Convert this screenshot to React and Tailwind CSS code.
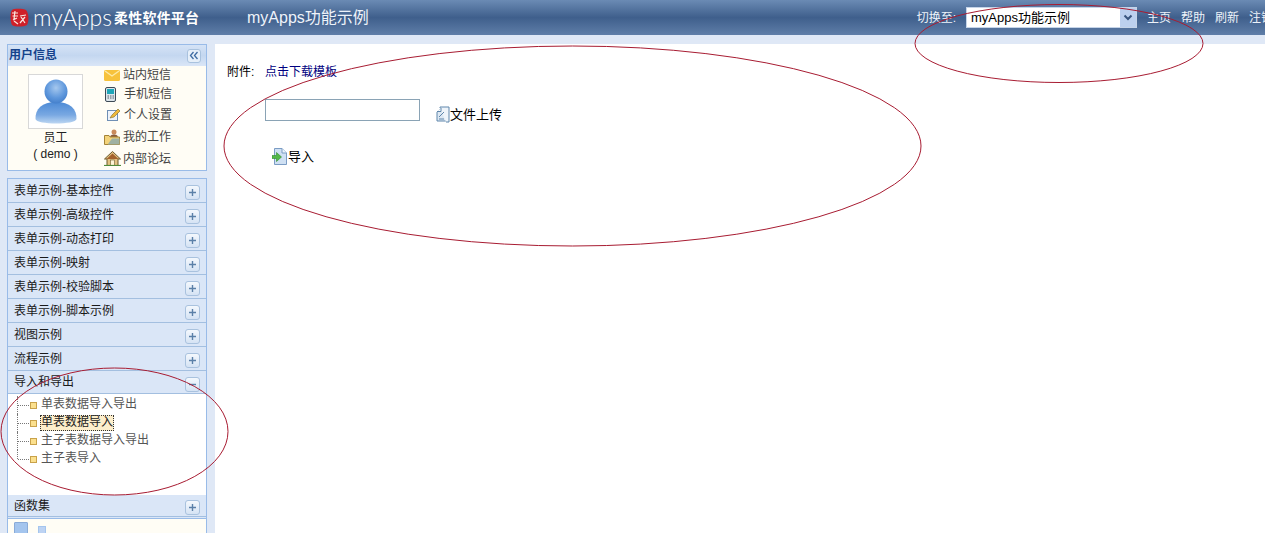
import React from 'react';

const ff = "font-['Liberation_Sans','Noto_Sans_CJK_SC',sans-serif]";

function Plus({ minus }) {
  return (
    <div className="mt-[4px] w-[15px] h-[15px] rounded-[3px] border border-[#a9c2de] bg-gradient-to-b from-[#f4f8fd] to-[#d5e3f4] flex items-center justify-center shrink-0">
      <svg width="9" height="9" viewBox="0 0 9 9">
        <path d={minus ? "M1 4.500H8" : "M1 4.500H8M4.500 1V8"} stroke="#5b80a8" strokeWidth="1.400" fill="none" />
      </svg>
    </div>
  );
}

function Row({ label, minus, h = 'h-[24px]' }) {
  return (
    <div className={`${h} shrink-0 flex items-center justify-between pl-[6px] pr-[6px] bg-[#dae6f7] border-b border-[#a3bfe0] text-[12px] text-[#1a1a1a]`}>
      <span>{label}</span>
      <Plus minus={minus} />
    </div>
  );
}

function Mail() {
  return (
    <svg width="16" height="11" viewBox="0 0 16 11">
      <rect x="0" y="0" width="16" height="11" rx="1.500" fill="#f7c23c" />
      <path d="M1 1L8 6L15 1" stroke="#fdeaa6" strokeWidth="1.400" fill="none" />
    </svg>
  );
}
function Phone() {
  return (
    <svg width="11" height="15" viewBox="0 0 11 15">
      <rect x="0.500" y="0.500" width="10" height="14" rx="1.500" fill="#dbe4ea" stroke="#3d4a55" />
      <rect x="2" y="2" width="7" height="5" fill="#1fa6b8" />
      <path d="M2.500 9H4M5 9H6.500M7.500 9H9M2.500 11H4M5 11H6.500M7.500 11H9" stroke="#56626c" />
    </svg>
  );
}
function Note() {
  return (
    <svg width="14" height="13" viewBox="0 0 14 13">
      <rect x="0.500" y="2.500" width="10" height="10" fill="#eef3fa" stroke="#6f8fb5" />
      <path d="M3 10L5 7L11 1L13 3L7 9Z" fill="#f0b93a" stroke="#7a6a2a" strokeWidth="0.600" />
    </svg>
  );
}
function Work() {
  return (
    <svg width="16" height="16" viewBox="0 0 16 16">
      <circle cx="10" cy="3" r="2.500" fill="#c98a5a" />
      <path d="M6 9C6 6 8 5.500 10 5.500S14 6 14 9Z" fill="#8a5a3a" />
      <path d="M0.500 6.500H5L6 8H15.500V15.500H0.500Z" fill="#f3d37a" stroke="#a58438" />
      <path d="M4 15L8 9.500H15.500V15.500H4Z" fill="#9fb1a2" />
    </svg>
  );
}
function House() {
  return (
    <svg width="17" height="15" viewBox="0 0 17 15">
      <path d="M8.500 0.500L0.500 8H3V14.500H14V8H16.500Z" fill="#e2c283" stroke="#6c5a2c" />
      <path d="M8.500 2.500L2.500 8H14.500Z" fill="#a3622d" />
      <rect x="6.500" y="9" width="4" height="5.500" fill="#fff5d6" stroke="#6c5a2c" strokeWidth="0.600" />
      <path d="M0 14.500H17" stroke="#4f8a3b" strokeWidth="1.200" />
    </svg>
  );
}
function Avatar() {
  return (
    <svg width="42" height="46" viewBox="0 0 42 46">
      <defs>
        <radialGradient id="a" cx="0.500" cy="0.350" r="0.700">
          <stop offset="0" stopColor="#a6c8ee" />
          <stop offset="0.600" stopColor="#5e97dc" />
          <stop offset="1" stopColor="#3f7bc8" />
        </radialGradient>
        <linearGradient id="b" x1="0" y1="0" x2="0" y2="1">
          <stop offset="0" stopColor="#4c8ad6" />
          <stop offset="0.600" stopColor="#79a8e2" />
          <stop offset="1" stopColor="#bcd6f2" />
        </linearGradient>
      </defs>
      <path d="M0.500 40C0 30 7 23 21 23S42 30 41.500 40C41 46 1 46 0.500 40Z" fill="url(#b)" />
      <ellipse cx="21" cy="12.500" rx="11.500" ry="12" fill="url(#a)" />
    </svg>
  );
}

function UploadIcon() {
  return (
    <svg width="14" height="18" viewBox="0 0 14 18">
      <path d="M1 6L5 2H10V15H1Z" fill="#dde8f3" stroke="#5f86ab" />
      <path d="M4 2V1H9L13 1V16H10" fill="#eef4fa" stroke="#5f86ab" />
      <path d="M1 5.500H5V2" fill="#fff" stroke="#5f86ab" />
      <path d="M3 11L8 6M3 13H8" stroke="#5f86ab" />
    </svg>
  );
}
function ImportIcon() {
  return (
    <svg width="16" height="17" viewBox="0 0 16 17">
      <path d="M2.500 0.500H10L14.500 5V16.500H2.500Z" fill="#cfe0f3" stroke="#7b9cc4" />
      <path d="M10 0.500V5H14.500" fill="#eef5fc" stroke="#7b9cc4" />
      <path d="M0 7.500H4.500V4.500L9.500 9L4.500 13.500V10.500H0Z" fill="#52b848" stroke="#2f8a2f" strokeWidth="0.600" />
    </svg>
  );
}
function Logo() {
  return (
    <svg width="19" height="19" viewBox="0 0 19 19">
      <path d="M2 2C5 0 14 1 16 2C19 5 19 14 17 17C13 19 5 19 2 17C0 13 0 5 2 2Z" fill="#cf2029" />
      <path d="M2 5H8M2.500 8H8M5 3L4 11M3 12L7 10M10 8L16 7M11 9L15 15M15 9L10 15M4 13L8 16" stroke="#fbe8e0" strokeWidth="1.200" fill="none" />
    </svg>
  );
}

function Tree({ label, last, selected }) {
  return (
    <div className="h-[18px] flex items-center relative">
      <span className={`absolute left-[9px] top-0 border-l border-dotted border-[#777] ${last ? 'h-[9px]' : 'h-[18px]'}`} />
      <span className="ml-[10px] w-[11px] border-t border-dotted border-[#777]" />
      <span className="w-[7px] h-[7px] bg-[#fbe08e] border border-[#c9a24a] mr-[3px] ml-[1px] shrink-0" />
      <span className={`text-[12px] h-[16px] leading-[15px] pl-[1px] pr-[1px] ${selected ? 'bg-[#fdeecb] outline-dotted outline-1 outline-offset-[-1px] outline-[#333] text-[#222]' : 'text-[#555]'}`}>{label}</span>
    </div>
  );
}

const links = [
  { icon: <Mail />, label: '站内短信', cls: 'h-[18px] pl-0 gap-[3px]', w: 'w-[16px]' },
  { icon: <Phone />, label: '手机短信', cls: 'h-[20px] pl-px gap-[8px]', w: 'w-[11px]' },
  { icon: <Note />, label: '个人设置', cls: 'h-[21px] pl-[3px] gap-[3px]', w: 'w-[14px]' },
  { icon: <Work />, label: '我的工作', cls: 'h-[23px] pl-0 gap-[3px]', w: 'w-[16px]' },
  { icon: <House />, label: '内部论坛', cls: 'h-[21px] pl-0 gap-[2px]', w: 'w-[17px]' },
];

export default function App() {
  return (
    <div className={`relative w-[1265px] h-[533px] overflow-hidden bg-[#dfe8f6] ${ff}`}>
      <header className="h-[35px] flex items-center bg-gradient-to-b from-[#6b8bb4] via-[#3f5f8c] to-[#5f7ea8] text-white">
        <div className="w-[247px] pl-[10px] flex items-center shrink-0">
          <Logo />
          <span className="ml-[4px] text-[23px] leading-none font-light font-['Lato',sans-serif]">myApps</span>
          <span className="ml-[2px] text-[14px] font-bold leading-none tracking-[0.2px]">柔性软件平台</span>
        </div>
        <span className="text-[16px] text-[#eef3fa]">myApps功能示例</span>
        <div className="ml-auto flex items-center text-[12px] text-[#eef3fa]">
          <span className="mr-[10px]">切换至:</span>
          <div className="w-[171px] h-[21px] bg-white border border-[#c5d4e8] flex items-center justify-between pl-[4px] text-black text-[13px] mr-[10px]">
            <span>myApps功能示例</span>
            <div className="w-[16px] h-[19px] bg-[#bcd0ee] flex items-center justify-center">
              <svg width="10" height="8" viewBox="0 0 10 8">
                <path d="M1.500 1.500L5 5L8.500 1.500" stroke="#39557e" strokeWidth="2" fill="none" />
              </svg>
            </div>
          </div>
          <div className="flex gap-[10px] w-[118px] whitespace-nowrap shrink-0">
            <span>主页</span><span>帮助</span><span>刷新</span><span>注销</span>
          </div>
        </div>
      </header>

      <div className="flex pt-[9px] h-[498px]">
        <aside className="ml-[7px] w-[200px] shrink-0 flex flex-col">
          <section className="h-[127px] shrink-0 border border-[#99bbe8] bg-[#fffdf5]">
            <div className="h-[21px] flex items-center justify-between pl-[1px] pr-[5px] bg-gradient-to-b from-[#d5e3f6] via-[#c4d7f0] to-[#dae6f7] text-[12px] font-bold text-[#15428b]">
              <span className="mb-[2px]">用户信息</span>
              <div className="w-[14px] h-[14px] rounded-[3px] border border-[#a9c2de] bg-[#e6eff9] flex items-center justify-center">
                <svg width="10" height="9" viewBox="0 0 10 9">
                  <path d="M4.500 1L1.500 4.500L4.500 8M8.500 1L5.500 4.500L8.500 8" stroke="#3f6ca3" strokeWidth="1.300" fill="none" />
                </svg>
              </div>
            </div>
            <div className="flex pl-[20px]">
              <div className="w-[55px] flex flex-col items-center pt-[8px] text-[12px] text-[#222]">
                <div className="w-[55px] h-[55px] border border-[#d8d8d8] bg-white flex items-center justify-center">
                  <Avatar />
                </div>
                <span className="leading-[16px] mt-[1px]">员工</span>
                <span className="leading-[15px] mt-px">( demo )</span>
              </div>
              <div className="ml-[21px] flex flex-col text-[12px] text-[#444]">
                {links.map((l) => (
                  <div key={l.label} className={`flex items-center ${l.cls}`}>
                    <span className={`${l.w} flex justify-center`}>{l.icon}</span>
                    <span>{l.label}</span>
                  </div>
                ))}
              </div>
            </div>
          </section>

          <section className="mt-[7px] border border-[#99bbe8] border-b-0 flex flex-col flex-1 min-h-0 overflow-hidden bg-[#dae6f7]">
            <Row label="表单示例-基本控件" />
            <Row label="表单示例-高级控件" />
            <Row label="表单示例-动态打印" />
            <Row label="表单示例-映射" />
            <Row label="表单示例-校验脚本" />
            <Row label="表单示例-脚本示例" />
            <Row label="视图示例" />
            <Row label="流程示例" />
            <Row label="导入和导出" minus h="h-[23px]" />
            <div className="h-[101px] bg-white pt-[2px] shrink-0">
              <Tree label="单表数据导入导出" />
              <Tree label="单表数据导入" selected />
              <Tree label="主子表数据导入导出" />
              <Tree label="主子表导入" last />
            </div>
            <Row label="函数集" h="h-[22px]" />
            <div className="mt-px flex-1 bg-[#fffdf5] border-t border-[#99bbe8] pl-[6px] pt-[3px] flex items-start gap-[10px]">
              <div className="w-[14px] h-[14px] shrink-0 rounded-[1px] bg-[#a4c5ee] border border-[#8aabd8]" />
              <div className="mt-[4px] w-[8px] h-[8px] shrink-0 bg-[#bdd3f3] border border-[#a4c5ee]" />
            </div>
          </section>
        </aside>

        <main className="ml-[8px] flex-1 bg-white pl-[12px] text-[12px] text-black">
          <div className="pt-[19px] flex h-[37px] items-center">
            <span className="w-[38px]">附件:</span>
            <span className="text-[#000080]">点击下载模板</span>
          </div>
          <div className="mt-[18px] ml-[38px] flex items-start">
            <div className="w-[155px] h-[22px] border border-[#8aa3b5] bg-white" />
            <div className="ml-[16px] flex items-center h-[20px] mt-[6px] text-[13px]">
              <UploadIcon />
              <span>文件上传</span>
            </div>
          </div>
          <div className="mt-[22px] ml-[45px] flex items-center text-[13px]">
            <ImportIcon />
            <span>导入</span>
          </div>
        </main>
      </div>

      {/* hand-drawn red annotation ellipses lying over the page */}
      <svg className="absolute inset-0 pointer-events-none" width="1265" height="533">
        <ellipse cx="572.500" cy="146" rx="348.500" ry="100" fill="none" stroke="#a81c32" strokeWidth="1" />
        <ellipse cx="1059" cy="43.500" rx="144" ry="39" fill="none" stroke="#a81c32" strokeWidth="1" />
        <ellipse cx="114.500" cy="431.500" rx="113.500" ry="63.500" fill="none" stroke="#a81c32" strokeWidth="1" />
      </svg>
    </div>
  );
}
